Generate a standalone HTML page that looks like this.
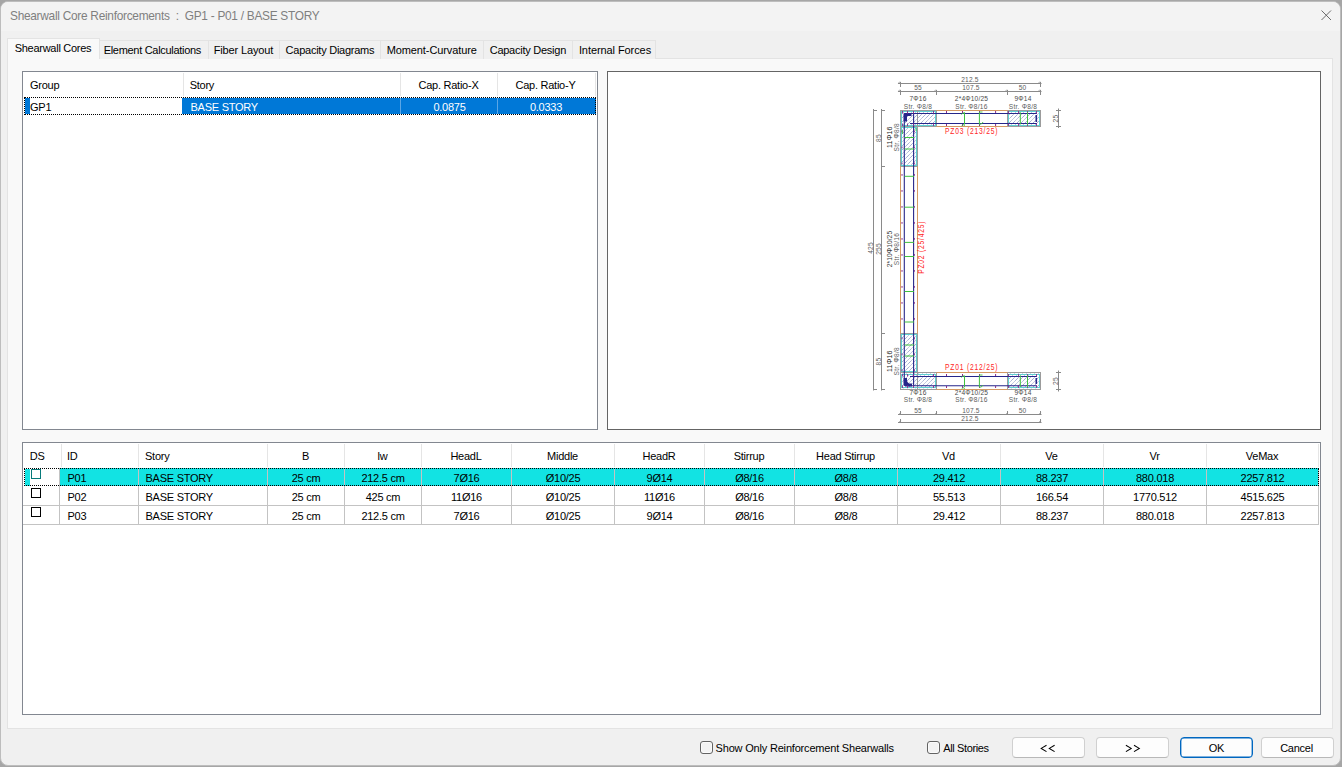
<!DOCTYPE html><html><head><meta charset="utf-8"><style>
html,body{margin:0;padding:0;}
body{width:1342px;height:767px;position:relative;overflow:hidden;background:#a6a6a6;font-family:"Liberation Sans", sans-serif;}
div{box-sizing:border-box;}
</style></head><body>
<div style="position:absolute;left:0px;top:1px;width:1341px;height:765px;background:#f0f0f0;border:1px solid #bdbdbd;border-radius:8px;overflow:hidden"></div>
<div style="position:absolute;left:1px;top:2px;width:1339px;height:29px;background:#f3f3f3;border-radius:7px 7px 0 0"></div>
<div style="position:absolute;left:10px;top:9.1px;line-height:13px;font-size:13px;letter-spacing:-0.3px;color:#7f7f7f;white-space:pre;transform:scaleX(0.913);transform-origin:0 0">Shearwall Core Reinforcements  :  GP1 - P01 / BASE STORY</div>
<svg style="position:absolute;left:1319px;top:8px" width="14" height="14" viewBox="0 0 14 14"><path d="M2.5 2.5L12 12M12 2.5L2.5 12" stroke="#5a5a5a" stroke-width="0.9" fill="none"/></svg>
<div style="position:absolute;left:7px;top:58px;width:1326px;height:671px;background:#f9f9f9;border:1px solid #e3e3e3"></div>
<div style="position:absolute;left:99px;top:40px;width:110px;height:19px;background:#f0f0f0;border:1px solid #e3e3e3;border-bottom:none"></div>
<div style="position:absolute;left:103.7px;top:44.69px;line-height:11px;font-size:11px;letter-spacing:-0.3px;color:#000;white-space:pre;">Element Calculations</div>
<div style="position:absolute;left:208px;top:40px;width:72px;height:19px;background:#f0f0f0;border:1px solid #e3e3e3;border-bottom:none"></div>
<div style="position:absolute;left:213.7px;top:44.69px;line-height:11px;font-size:11px;letter-spacing:-0.13px;color:#000;white-space:pre;">Fiber Layout</div>
<div style="position:absolute;left:279px;top:40px;width:102px;height:19px;background:#f0f0f0;border:1px solid #e3e3e3;border-bottom:none"></div>
<div style="position:absolute;left:285.6px;top:44.69px;line-height:11px;font-size:11px;letter-spacing:-0.25px;color:#000;white-space:pre;">Capacity Diagrams</div>
<div style="position:absolute;left:380px;top:40px;width:104px;height:19px;background:#f0f0f0;border:1px solid #e3e3e3;border-bottom:none"></div>
<div style="position:absolute;left:386.7px;top:44.69px;line-height:11px;font-size:11px;letter-spacing:-0.1px;color:#000;white-space:pre;">Moment-Curvature</div>
<div style="position:absolute;left:483px;top:40px;width:90px;height:19px;background:#f0f0f0;border:1px solid #e3e3e3;border-bottom:none"></div>
<div style="position:absolute;left:489.7px;top:44.69px;line-height:11px;font-size:11px;letter-spacing:-0.25px;color:#000;white-space:pre;">Capacity Design</div>
<div style="position:absolute;left:572px;top:40px;width:84px;height:19px;background:#f0f0f0;border:1px solid #e3e3e3;border-bottom:none"></div>
<div style="position:absolute;left:578.9px;top:44.69px;line-height:11px;font-size:11px;letter-spacing:-0.08px;color:#000;white-space:pre;">Internal Forces</div>
<div style="position:absolute;left:7px;top:38px;width:93px;height:21px;background:#f9f9f9;border:1px solid #e3e3e3;border-bottom:none"></div>
<div style="position:absolute;left:14.7px;top:42.69px;line-height:11px;font-size:11px;letter-spacing:-0.27px;color:#000;white-space:pre;">Shearwall Cores</div>
<div style="position:absolute;left:22px;top:71px;width:576px;height:359px;background:#fff;border:1px solid #828790"></div>
<div style="position:absolute;left:183px;top:73px;width:1px;height:23px;background:#e5e5e5"></div>
<div style="position:absolute;left:400px;top:73px;width:1px;height:23px;background:#e5e5e5"></div>
<div style="position:absolute;left:497px;top:73px;width:1px;height:23px;background:#e5e5e5"></div>
<div style="position:absolute;left:595px;top:73px;width:1px;height:23px;background:#e5e5e5"></div>
<div style="position:absolute;left:30px;top:79.69px;line-height:11px;font-size:11px;letter-spacing:-0.25px;color:#000;white-space:pre;">Group</div>
<div style="position:absolute;left:189.7px;top:79.69px;line-height:11px;font-size:11px;letter-spacing:-0.25px;color:#000;white-space:pre;">Story</div>
<div style="position:absolute;left:248.5px;top:79.69px;width:400px;text-align:center;line-height:11px;font-size:11px;letter-spacing:-0.25px;color:#000;white-space:pre;">Cap. Ratio-X</div>
<div style="position:absolute;left:345.5px;top:79.69px;width:400px;text-align:center;line-height:11px;font-size:11px;letter-spacing:-0.25px;color:#000;white-space:pre;">Cap. Ratio-Y</div>
<div style="position:absolute;left:25px;top:98px;width:5px;height:16px;background:#0078d7"></div>
<div style="position:absolute;left:182px;top:98px;width:414px;height:16px;background:#0078d7"></div>
<div style="position:absolute;left:400px;top:98px;width:1px;height:16px;background:#5aa6e6"></div>
<div style="position:absolute;left:497px;top:98px;width:1px;height:16px;background:#5aa6e6"></div>
<div style="position:absolute;left:30px;top:101.79px;line-height:11px;font-size:11px;letter-spacing:-0.25px;color:#000;white-space:pre;">GP1</div>
<div style="position:absolute;left:190.5px;top:101.79px;line-height:11px;font-size:11px;letter-spacing:-0.25px;color:#fff;white-space:pre;">BASE STORY</div>
<div style="position:absolute;left:249.5px;top:101.79px;width:400px;text-align:center;line-height:11px;font-size:11px;letter-spacing:-0.25px;color:#fff;white-space:pre;">0.0875</div>
<div style="position:absolute;left:346.0px;top:101.79px;width:400px;text-align:center;line-height:11px;font-size:11px;letter-spacing:-0.25px;color:#fff;white-space:pre;">0.0333</div>
<div style="position:absolute;left:24px;top:97px;width:572px;height:18px;border:1px dotted #000"></div>
<div style="position:absolute;left:607px;top:71px;width:714px;height:359px;background:#fff;border:1px solid #646464"></div>
<svg style="position:absolute;left:608px;top:72px" width="712" height="357" viewBox="608 72 712 357">
<defs><pattern id="ht" patternUnits="userSpaceOnUse" x="0.5" y="0.5" width="4" height="4"><path d="M0 4 L4 0 M-1 1 L1 -1 M3 5 L5 3" stroke="#5d71ad" stroke-width="0.85" stroke-dasharray="1 0.6"/></pattern></defs>
<clipPath id="c0"><rect x="901.5" y="111.5" width="34" height="14"/></clipPath>
<path clip-path="url(#c0)" d="M877.5 126.5L893.5 110.5M881.5 126.5L897.5 110.5M885.5 126.5L901.5 110.5M889.5 126.5L905.5 110.5M893.5 126.5L909.5 110.5M897.5 126.5L913.5 110.5M901.5 126.5L917.5 110.5M905.5 126.5L921.5 110.5M909.5 126.5L925.5 110.5M913.5 126.5L929.5 110.5M917.5 126.5L933.5 110.5M921.5 126.5L937.5 110.5M925.5 126.5L941.5 110.5M929.5 126.5L945.5 110.5M933.5 126.5L949.5 110.5M937.5 126.5L953.5 110.5" stroke="#5d71ad" stroke-width="0.8" stroke-dasharray="1 0.7" fill="none"/>
<rect x="901.5" y="111.5" width="34" height="14" fill="none" stroke="#5fd2d2" stroke-width="1" />
<clipPath id="c1"><rect x="1008.5" y="111.5" width="31" height="14"/></clipPath>
<path clip-path="url(#c1)" d="M985.5 126.5L1001.5 110.5M989.5 126.5L1005.5 110.5M993.5 126.5L1009.5 110.5M997.5 126.5L1013.5 110.5M1001.5 126.5L1017.5 110.5M1005.5 126.5L1021.5 110.5M1009.5 126.5L1025.5 110.5M1013.5 126.5L1029.5 110.5M1017.5 126.5L1033.5 110.5M1021.5 126.5L1037.5 110.5M1025.5 126.5L1041.5 110.5M1029.5 126.5L1045.5 110.5M1033.5 126.5L1049.5 110.5M1037.5 126.5L1053.5 110.5M1041.5 126.5L1057.5 110.5" stroke="#5d71ad" stroke-width="0.8" stroke-dasharray="1 0.7" fill="none"/>
<rect x="1008.5" y="111.5" width="31" height="14" fill="none" stroke="#5fd2d2" stroke-width="1" />
<clipPath id="c2"><rect x="901.5" y="127.5" width="15" height="38"/></clipPath>
<path clip-path="url(#c2)" d="M853.5 166.5L893.5 126.5M857.5 166.5L897.5 126.5M861.5 166.5L901.5 126.5M865.5 166.5L905.5 126.5M869.5 166.5L909.5 126.5M873.5 166.5L913.5 126.5M877.5 166.5L917.5 126.5M881.5 166.5L921.5 126.5M885.5 166.5L925.5 126.5M889.5 166.5L929.5 126.5M893.5 166.5L933.5 126.5M897.5 166.5L937.5 126.5M901.5 166.5L941.5 126.5M905.5 166.5L945.5 126.5M909.5 166.5L949.5 126.5M913.5 166.5L953.5 126.5M917.5 166.5L957.5 126.5" stroke="#5d71ad" stroke-width="0.8" stroke-dasharray="1 0.7" fill="none"/>
<rect x="901.5" y="127.5" width="15" height="38" fill="none" stroke="#5fd2d2" stroke-width="1" />
<clipPath id="c3"><rect x="901.5" y="334.5" width="15" height="37"/></clipPath>
<path clip-path="url(#c3)" d="M855.5 372.5L894.5 333.5M859.5 372.5L898.5 333.5M863.5 372.5L902.5 333.5M867.5 372.5L906.5 333.5M871.5 372.5L910.5 333.5M875.5 372.5L914.5 333.5M879.5 372.5L918.5 333.5M883.5 372.5L922.5 333.5M887.5 372.5L926.5 333.5M891.5 372.5L930.5 333.5M895.5 372.5L934.5 333.5M899.5 372.5L938.5 333.5M903.5 372.5L942.5 333.5M907.5 372.5L946.5 333.5M911.5 372.5L950.5 333.5M915.5 372.5L954.5 333.5M919.5 372.5L958.5 333.5" stroke="#5d71ad" stroke-width="0.8" stroke-dasharray="1 0.7" fill="none"/>
<rect x="901.5" y="334.5" width="15" height="37" fill="none" stroke="#5fd2d2" stroke-width="1" />
<clipPath id="c4"><rect x="901.5" y="373.5" width="34" height="15"/></clipPath>
<path clip-path="url(#c4)" d="M878.5 389.5L895.5 372.5M882.5 389.5L899.5 372.5M886.5 389.5L903.5 372.5M890.5 389.5L907.5 372.5M894.5 389.5L911.5 372.5M898.5 389.5L915.5 372.5M902.5 389.5L919.5 372.5M906.5 389.5L923.5 372.5M910.5 389.5L927.5 372.5M914.5 389.5L931.5 372.5M918.5 389.5L935.5 372.5M922.5 389.5L939.5 372.5M926.5 389.5L943.5 372.5M930.5 389.5L947.5 372.5M934.5 389.5L951.5 372.5M938.5 389.5L955.5 372.5" stroke="#5d71ad" stroke-width="0.8" stroke-dasharray="1 0.7" fill="none"/>
<rect x="901.5" y="374.5" width="34" height="13" fill="none" stroke="#5fd2d2" stroke-width="1" />
<clipPath id="c5"><rect x="1008.5" y="373.5" width="31" height="15"/></clipPath>
<path clip-path="url(#c5)" d="M986.5 389.5L1003.5 372.5M990.5 389.5L1007.5 372.5M994.5 389.5L1011.5 372.5M998.5 389.5L1015.5 372.5M1002.5 389.5L1019.5 372.5M1006.5 389.5L1023.5 372.5M1010.5 389.5L1027.5 372.5M1014.5 389.5L1031.5 372.5M1018.5 389.5L1035.5 372.5M1022.5 389.5L1039.5 372.5M1026.5 389.5L1043.5 372.5M1030.5 389.5L1047.5 372.5M1034.5 389.5L1051.5 372.5M1038.5 389.5L1055.5 372.5M1042.5 389.5L1059.5 372.5" stroke="#5d71ad" stroke-width="0.8" stroke-dasharray="1 0.7" fill="none"/>
<rect x="1008.5" y="374.5" width="31" height="13" fill="none" stroke="#5fd2d2" stroke-width="1" />
<rect x="900.5" y="110.5" width="36" height="16" fill="none" stroke="#9c9c9c" stroke-width="1" />
<rect x="1007.5" y="110.5" width="33" height="16" fill="none" stroke="#9c9c9c" stroke-width="1" />
<rect x="900.5" y="126.5" width="17" height="40" fill="none" stroke="#9c9c9c" stroke-width="1" />
<rect x="900.5" y="333.5" width="17" height="39" fill="none" stroke="#9c9c9c" stroke-width="1" />
<rect x="900.5" y="372.5" width="36" height="17" fill="none" stroke="#9c9c9c" stroke-width="1" />
<rect x="1007.5" y="372.5" width="33" height="17" fill="none" stroke="#9c9c9c" stroke-width="1" />
<line x1="917.5" y1="110.5" x2="917.5" y2="126.5" stroke="#9c9c9c" stroke-width="1" />
<line x1="917.5" y1="372.5" x2="917.5" y2="389.5" stroke="#9c9c9c" stroke-width="1" />
<line x1="936.5" y1="110.5" x2="1007.5" y2="110.5" stroke="#d59a62" stroke-width="1" />
<line x1="936.5" y1="126.5" x2="1007.5" y2="126.5" stroke="#d59a62" stroke-width="1" />
<line x1="936.5" y1="372.5" x2="1007.5" y2="372.5" stroke="#d59a62" stroke-width="1" />
<line x1="936.5" y1="389.5" x2="1007.5" y2="389.5" stroke="#d59a62" stroke-width="1" />
<line x1="900.5" y1="166.5" x2="900.5" y2="333.5" stroke="#d59a62" stroke-width="1" />
<line x1="917.5" y1="166.5" x2="917.5" y2="333.5" stroke="#d59a62" stroke-width="1" />
<line x1="905" y1="113.5" x2="1037" y2="113.5" stroke="#26268a" stroke-width="1.1" />
<line x1="910" y1="123.5" x2="1037" y2="123.5" stroke="#26268a" stroke-width="1.1" />
<line x1="910" y1="376.5" x2="1037" y2="376.5" stroke="#26268a" stroke-width="1.1" />
<line x1="905" y1="385.7" x2="1037" y2="385.7" stroke="#26268a" stroke-width="1.1" />
<line x1="904.3" y1="113" x2="904.3" y2="386" stroke="#26268a" stroke-width="1.1" />
<line x1="913.6" y1="114" x2="913.6" y2="386" stroke="#26268a" stroke-width="1.1" />
<line x1="1036.3" y1="115" x2="1036.3" y2="122" stroke="#26268a" stroke-width="1.6" />
<line x1="1036.3" y1="378" x2="1036.3" y2="384" stroke="#26268a" stroke-width="1.6" />
<path d="M903.6 121.5 L903.6 114.5 Q903.6 113 905.5 113 L911.5 113 L911.5 116 L907 116 L907 121.5 Z" fill="#26268a"/>
<path d="M903.6 378 L903.6 383 Q904 386.5 908 386.5 L912 386.5 L912 383.5 L909 383.5 Q907 383 907 380 L907 378 Z" fill="#26268a"/>
<line x1="946.5" y1="111" x2="946.5" y2="113" stroke="#8c2a8c" stroke-width="1" />
<line x1="946.5" y1="124" x2="946.5" y2="126" stroke="#8c2a8c" stroke-width="1" />
<line x1="946.5" y1="374" x2="946.5" y2="376" stroke="#8c2a8c" stroke-width="1" />
<line x1="946.5" y1="386" x2="946.5" y2="388" stroke="#8c2a8c" stroke-width="1" />
<line x1="962.5" y1="111" x2="962.5" y2="113" stroke="#8c2a8c" stroke-width="1" />
<line x1="962.5" y1="124" x2="962.5" y2="126" stroke="#8c2a8c" stroke-width="1" />
<line x1="962.5" y1="374" x2="962.5" y2="376" stroke="#8c2a8c" stroke-width="1" />
<line x1="962.5" y1="386" x2="962.5" y2="388" stroke="#8c2a8c" stroke-width="1" />
<line x1="979.5" y1="111" x2="979.5" y2="113" stroke="#8c2a8c" stroke-width="1" />
<line x1="979.5" y1="124" x2="979.5" y2="126" stroke="#8c2a8c" stroke-width="1" />
<line x1="979.5" y1="374" x2="979.5" y2="376" stroke="#8c2a8c" stroke-width="1" />
<line x1="979.5" y1="386" x2="979.5" y2="388" stroke="#8c2a8c" stroke-width="1" />
<line x1="995.6" y1="111" x2="995.6" y2="113" stroke="#8c2a8c" stroke-width="1" />
<line x1="995.6" y1="124" x2="995.6" y2="126" stroke="#8c2a8c" stroke-width="1" />
<line x1="995.6" y1="374" x2="995.6" y2="376" stroke="#8c2a8c" stroke-width="1" />
<line x1="995.6" y1="386" x2="995.6" y2="388" stroke="#8c2a8c" stroke-width="1" />
<line x1="902.5" y1="111" x2="902.5" y2="113.5" stroke="#8c2a8c" stroke-width="0.9" />
<line x1="902.5" y1="123.5" x2="902.5" y2="126" stroke="#8c2a8c" stroke-width="0.9" />
<line x1="902.5" y1="374" x2="902.5" y2="376.5" stroke="#8c2a8c" stroke-width="0.9" />
<line x1="902.5" y1="385.5" x2="902.5" y2="388" stroke="#8c2a8c" stroke-width="0.9" />
<line x1="907.5" y1="111" x2="907.5" y2="113.5" stroke="#8c2a8c" stroke-width="0.9" />
<line x1="907.5" y1="123.5" x2="907.5" y2="126" stroke="#8c2a8c" stroke-width="0.9" />
<line x1="907.5" y1="374" x2="907.5" y2="376.5" stroke="#8c2a8c" stroke-width="0.9" />
<line x1="907.5" y1="385.5" x2="907.5" y2="388" stroke="#8c2a8c" stroke-width="0.9" />
<line x1="913.5" y1="111" x2="913.5" y2="113.5" stroke="#8c2a8c" stroke-width="0.9" />
<line x1="913.5" y1="123.5" x2="913.5" y2="126" stroke="#8c2a8c" stroke-width="0.9" />
<line x1="913.5" y1="374" x2="913.5" y2="376.5" stroke="#8c2a8c" stroke-width="0.9" />
<line x1="913.5" y1="385.5" x2="913.5" y2="388" stroke="#8c2a8c" stroke-width="0.9" />
<line x1="933.5" y1="111" x2="933.5" y2="113.5" stroke="#8c2a8c" stroke-width="0.9" />
<line x1="933.5" y1="123.5" x2="933.5" y2="126" stroke="#8c2a8c" stroke-width="0.9" />
<line x1="933.5" y1="374" x2="933.5" y2="376.5" stroke="#8c2a8c" stroke-width="0.9" />
<line x1="933.5" y1="385.5" x2="933.5" y2="388" stroke="#8c2a8c" stroke-width="0.9" />
<line x1="1008.5" y1="111" x2="1008.5" y2="113.5" stroke="#8c2a8c" stroke-width="0.9" />
<line x1="1008.5" y1="123.5" x2="1008.5" y2="126" stroke="#8c2a8c" stroke-width="0.9" />
<line x1="1008.5" y1="374" x2="1008.5" y2="376.5" stroke="#8c2a8c" stroke-width="0.9" />
<line x1="1008.5" y1="385.5" x2="1008.5" y2="388" stroke="#8c2a8c" stroke-width="0.9" />
<line x1="1018.5" y1="111" x2="1018.5" y2="113.5" stroke="#8c2a8c" stroke-width="0.9" />
<line x1="1018.5" y1="123.5" x2="1018.5" y2="126" stroke="#8c2a8c" stroke-width="0.9" />
<line x1="1018.5" y1="374" x2="1018.5" y2="376.5" stroke="#8c2a8c" stroke-width="0.9" />
<line x1="1018.5" y1="385.5" x2="1018.5" y2="388" stroke="#8c2a8c" stroke-width="0.9" />
<line x1="1027.5" y1="111" x2="1027.5" y2="113.5" stroke="#8c2a8c" stroke-width="0.9" />
<line x1="1027.5" y1="123.5" x2="1027.5" y2="126" stroke="#8c2a8c" stroke-width="0.9" />
<line x1="1027.5" y1="374" x2="1027.5" y2="376.5" stroke="#8c2a8c" stroke-width="0.9" />
<line x1="1027.5" y1="385.5" x2="1027.5" y2="388" stroke="#8c2a8c" stroke-width="0.9" />
<line x1="1036.5" y1="111" x2="1036.5" y2="113.5" stroke="#8c2a8c" stroke-width="0.9" />
<line x1="1036.5" y1="123.5" x2="1036.5" y2="126" stroke="#8c2a8c" stroke-width="0.9" />
<line x1="1036.5" y1="374" x2="1036.5" y2="376.5" stroke="#8c2a8c" stroke-width="0.9" />
<line x1="1036.5" y1="385.5" x2="1036.5" y2="388" stroke="#8c2a8c" stroke-width="0.9" />
<line x1="902" y1="174" x2="902" y2="175.8" stroke="#8c2a8c" stroke-width="1" />
<line x1="914.5" y1="174" x2="914.5" y2="175.8" stroke="#8c2a8c" stroke-width="0.8" />
<line x1="902" y1="190" x2="902" y2="191.8" stroke="#8c2a8c" stroke-width="1" />
<line x1="914.5" y1="190" x2="914.5" y2="191.8" stroke="#8c2a8c" stroke-width="0.8" />
<line x1="902" y1="206" x2="902" y2="207.8" stroke="#8c2a8c" stroke-width="1" />
<line x1="914.5" y1="206" x2="914.5" y2="207.8" stroke="#8c2a8c" stroke-width="0.8" />
<line x1="902" y1="222" x2="902" y2="223.8" stroke="#8c2a8c" stroke-width="1" />
<line x1="914.5" y1="222" x2="914.5" y2="223.8" stroke="#8c2a8c" stroke-width="0.8" />
<line x1="902" y1="238" x2="902" y2="239.8" stroke="#8c2a8c" stroke-width="1" />
<line x1="914.5" y1="238" x2="914.5" y2="239.8" stroke="#8c2a8c" stroke-width="0.8" />
<line x1="902" y1="254" x2="902" y2="255.8" stroke="#8c2a8c" stroke-width="1" />
<line x1="914.5" y1="254" x2="914.5" y2="255.8" stroke="#8c2a8c" stroke-width="0.8" />
<line x1="902" y1="270" x2="902" y2="271.8" stroke="#8c2a8c" stroke-width="1" />
<line x1="914.5" y1="270" x2="914.5" y2="271.8" stroke="#8c2a8c" stroke-width="0.8" />
<line x1="902" y1="286" x2="902" y2="287.8" stroke="#8c2a8c" stroke-width="1" />
<line x1="914.5" y1="286" x2="914.5" y2="287.8" stroke="#8c2a8c" stroke-width="0.8" />
<line x1="902" y1="302" x2="902" y2="303.8" stroke="#8c2a8c" stroke-width="1" />
<line x1="914.5" y1="302" x2="914.5" y2="303.8" stroke="#8c2a8c" stroke-width="0.8" />
<line x1="902" y1="318" x2="902" y2="319.8" stroke="#8c2a8c" stroke-width="1" />
<line x1="914.5" y1="318" x2="914.5" y2="319.8" stroke="#8c2a8c" stroke-width="0.8" />
<line x1="902" y1="130.5" x2="902" y2="132.3" stroke="#8c2a8c" stroke-width="1" />
<line x1="914.5" y1="130.5" x2="914.5" y2="132.3" stroke="#8c2a8c" stroke-width="0.8" />
<line x1="902" y1="146.5" x2="902" y2="148.3" stroke="#8c2a8c" stroke-width="1" />
<line x1="914.5" y1="146.5" x2="914.5" y2="148.3" stroke="#8c2a8c" stroke-width="0.8" />
<line x1="902" y1="162.5" x2="902" y2="164.3" stroke="#8c2a8c" stroke-width="1" />
<line x1="914.5" y1="162.5" x2="914.5" y2="164.3" stroke="#8c2a8c" stroke-width="0.8" />
<line x1="902" y1="337.5" x2="902" y2="339.3" stroke="#8c2a8c" stroke-width="1" />
<line x1="914.5" y1="337.5" x2="914.5" y2="339.3" stroke="#8c2a8c" stroke-width="0.8" />
<line x1="902" y1="353.5" x2="902" y2="355.3" stroke="#8c2a8c" stroke-width="1" />
<line x1="914.5" y1="353.5" x2="914.5" y2="355.3" stroke="#8c2a8c" stroke-width="0.8" />
<line x1="902" y1="369.5" x2="902" y2="371.3" stroke="#8c2a8c" stroke-width="1" />
<line x1="914.5" y1="369.5" x2="914.5" y2="371.3" stroke="#8c2a8c" stroke-width="0.8" />
<line x1="964.5" y1="112.3" x2="964.5" y2="124.5" stroke="#3fc23f" stroke-width="1" />
<line x1="964.5" y1="375.5" x2="964.5" y2="387" stroke="#3fc23f" stroke-width="1" />
<line x1="979.4" y1="112.3" x2="979.4" y2="124.5" stroke="#3fc23f" stroke-width="1" />
<line x1="979.4" y1="375.5" x2="979.4" y2="387" stroke="#3fc23f" stroke-width="1" />
<line x1="1020.3" y1="112.3" x2="1020.3" y2="124.5" stroke="#3fc23f" stroke-width="1" />
<line x1="1020.3" y1="375.5" x2="1020.3" y2="387" stroke="#3fc23f" stroke-width="1" />
<line x1="1027.5" y1="112.3" x2="1027.5" y2="124.5" stroke="#3fc23f" stroke-width="1" />
<line x1="1027.5" y1="375.5" x2="1027.5" y2="387" stroke="#3fc23f" stroke-width="1" />
<line x1="904.5" y1="137.5" x2="914" y2="137.5" stroke="#3fc23f" stroke-width="1" />
<line x1="904.5" y1="149" x2="914" y2="149" stroke="#3fc23f" stroke-width="1" />
<line x1="904.5" y1="176.3" x2="914" y2="176.3" stroke="#3fc23f" stroke-width="1" />
<line x1="904.5" y1="207.2" x2="914" y2="207.2" stroke="#3fc23f" stroke-width="1" />
<line x1="904.5" y1="242.4" x2="914" y2="242.4" stroke="#3fc23f" stroke-width="1" />
<line x1="904.5" y1="256.5" x2="914" y2="256.5" stroke="#3fc23f" stroke-width="1" />
<line x1="904.5" y1="291.5" x2="914" y2="291.5" stroke="#3fc23f" stroke-width="1" />
<line x1="904.5" y1="322" x2="914" y2="322" stroke="#3fc23f" stroke-width="1" />
<line x1="904.5" y1="345" x2="914" y2="345" stroke="#3fc23f" stroke-width="1" />
<line x1="904.5" y1="356" x2="914" y2="356" stroke="#3fc23f" stroke-width="1" />
<line x1="902.5" y1="130" x2="902.5" y2="134" stroke="#3fc23f" stroke-width="0.8" />
<line x1="916" y1="128" x2="916" y2="131" stroke="#3fc23f" stroke-width="0.8" />
<path d="M961.5 114.5 L963 112.8 L964.5 113.5 M961.5 126 L963 124.6 L965 125.5 M979.4 112 L982.5 112 M979.4 124.5 L982 123.5 L983 122 M961.5 377.5 L963 375.8 L964.5 376.5 M961.5 389 L963 387.6 L965 388.5 M979.4 375 L982.5 375 M979.4 387.5 L982 386.5 L983 385" stroke="#3fc23f" stroke-width="0.9" fill="none"/>
<line x1="898.0" y1="83.5" x2="1041.5" y2="83.5" stroke="#8a8a8a" stroke-width="1" />
<line x1="900.5" y1="82.0" x2="900.5" y2="87.0" stroke="#8a8a8a" stroke-width="1" />
<line x1="898.5" y1="83.2" x2="899.9" y2="81.6" stroke="#8a8a8a" stroke-width="0.8" />
<line x1="1040.5" y1="82.0" x2="1040.5" y2="87.0" stroke="#8a8a8a" stroke-width="1" />
<line x1="1038.5" y1="83.2" x2="1039.9" y2="81.6" stroke="#8a8a8a" stroke-width="0.8" />
<line x1="898.0" y1="91.5" x2="1041.5" y2="91.5" stroke="#8a8a8a" stroke-width="1" />
<line x1="900.5" y1="90.0" x2="900.5" y2="95.0" stroke="#8a8a8a" stroke-width="1" />
<line x1="898.5" y1="91.2" x2="899.9" y2="89.6" stroke="#8a8a8a" stroke-width="0.8" />
<line x1="936.5" y1="90.0" x2="936.5" y2="95.0" stroke="#8a8a8a" stroke-width="1" />
<line x1="934.5" y1="91.2" x2="935.9" y2="89.6" stroke="#8a8a8a" stroke-width="0.8" />
<line x1="1007.5" y1="90.0" x2="1007.5" y2="95.0" stroke="#8a8a8a" stroke-width="1" />
<line x1="1005.5" y1="91.2" x2="1006.9" y2="89.6" stroke="#8a8a8a" stroke-width="0.8" />
<line x1="1040.5" y1="90.0" x2="1040.5" y2="95.0" stroke="#8a8a8a" stroke-width="1" />
<line x1="1038.5" y1="91.2" x2="1039.9" y2="89.6" stroke="#8a8a8a" stroke-width="0.8" />
<line x1="898.0" y1="414.5" x2="1041.5" y2="414.5" stroke="#8a8a8a" stroke-width="1" />
<line x1="900.5" y1="411.0" x2="900.5" y2="415.0" stroke="#8a8a8a" stroke-width="1" />
<line x1="898.5" y1="414.8" x2="900.5" y2="412.8" stroke="#8a8a8a" stroke-width="0.8" />
<line x1="936.5" y1="411.0" x2="936.5" y2="415.0" stroke="#8a8a8a" stroke-width="1" />
<line x1="934.5" y1="414.8" x2="936.5" y2="412.8" stroke="#8a8a8a" stroke-width="0.8" />
<line x1="1007.5" y1="411.0" x2="1007.5" y2="415.0" stroke="#8a8a8a" stroke-width="1" />
<line x1="1005.5" y1="414.8" x2="1007.5" y2="412.8" stroke="#8a8a8a" stroke-width="0.8" />
<line x1="1040.5" y1="411.0" x2="1040.5" y2="415.0" stroke="#8a8a8a" stroke-width="1" />
<line x1="1038.5" y1="414.8" x2="1040.5" y2="412.8" stroke="#8a8a8a" stroke-width="0.8" />
<line x1="898.0" y1="422.5" x2="1041.5" y2="422.5" stroke="#8a8a8a" stroke-width="1" />
<line x1="900.5" y1="419.0" x2="900.5" y2="423.0" stroke="#8a8a8a" stroke-width="1" />
<line x1="898.5" y1="422.8" x2="900.5" y2="420.8" stroke="#8a8a8a" stroke-width="0.8" />
<line x1="1040.5" y1="419.0" x2="1040.5" y2="423.0" stroke="#8a8a8a" stroke-width="1" />
<line x1="1038.5" y1="422.8" x2="1040.5" y2="420.8" stroke="#8a8a8a" stroke-width="0.8" />
<line x1="873.5" y1="109" x2="873.5" y2="390.5" stroke="#8a8a8a" stroke-width="1" />
<line x1="881.5" y1="109" x2="881.5" y2="390.5" stroke="#8a8a8a" stroke-width="1" />
<line x1="873.5" y1="110.5" x2="877" y2="110.5" stroke="#8a8a8a" stroke-width="1" />
<line x1="873.5" y1="389.5" x2="877" y2="389.5" stroke="#8a8a8a" stroke-width="1" />
<line x1="881.5" y1="110.5" x2="885" y2="110.5" stroke="#8a8a8a" stroke-width="1" />
<line x1="881.5" y1="166.5" x2="885" y2="166.5" stroke="#8a8a8a" stroke-width="1" />
<line x1="881.5" y1="333.5" x2="885" y2="333.5" stroke="#8a8a8a" stroke-width="1" />
<line x1="881.5" y1="389.5" x2="885" y2="389.5" stroke="#8a8a8a" stroke-width="1" />
<line x1="1058.5" y1="108.5" x2="1058.5" y2="128" stroke="#8a8a8a" stroke-width="1" />
<line x1="1056" y1="110.5" x2="1061" y2="110.5" stroke="#8a8a8a" stroke-width="1" />
<line x1="1056" y1="126.5" x2="1061" y2="126.5" stroke="#8a8a8a" stroke-width="1" />
<line x1="1058.5" y1="370.5" x2="1058.5" y2="391.5" stroke="#8a8a8a" stroke-width="1" />
<line x1="1056" y1="372.5" x2="1061" y2="372.5" stroke="#8a8a8a" stroke-width="1" />
<line x1="1056" y1="389.5" x2="1061" y2="389.5" stroke="#8a8a8a" stroke-width="1" />
<text x="970" y="81.8" font-family="Liberation Sans, sans-serif" font-size="6.6" fill="#5c5c5c" text-anchor="middle" letter-spacing="0.2" font-weight="normal">212.5</text>
<text x="918" y="89.9" font-family="Liberation Sans, sans-serif" font-size="6.6" fill="#5c5c5c" text-anchor="middle" letter-spacing="0.2" font-weight="normal">55</text>
<text x="971" y="89.9" font-family="Liberation Sans, sans-serif" font-size="6.6" fill="#5c5c5c" text-anchor="middle" letter-spacing="0.2" font-weight="normal">107.5</text>
<text x="1022.5" y="89.9" font-family="Liberation Sans, sans-serif" font-size="6.6" fill="#5c5c5c" text-anchor="middle" letter-spacing="0.2" font-weight="normal">50</text>
<text x="918" y="101" font-family="Liberation Sans, sans-serif" font-size="6.6" fill="#4a4a4a" text-anchor="middle" letter-spacing="0.2" font-weight="normal">7Φ16</text>
<text x="918" y="108.9" font-family="Liberation Sans, sans-serif" font-size="6.6" fill="#5c5c5c" text-anchor="middle" letter-spacing="0.25" font-weight="normal">Str. Φ8/8</text>
<text x="971.5" y="101" font-family="Liberation Sans, sans-serif" font-size="6.6" fill="#4a4a4a" text-anchor="middle" letter-spacing="0.2" font-weight="normal">2*4Φ10/25</text>
<text x="971.5" y="108.9" font-family="Liberation Sans, sans-serif" font-size="6.6" fill="#5c5c5c" text-anchor="middle" letter-spacing="0.25" font-weight="normal">Str. Φ8/16</text>
<text x="1023" y="101" font-family="Liberation Sans, sans-serif" font-size="6.6" fill="#4a4a4a" text-anchor="middle" letter-spacing="0.2" font-weight="normal">9Φ14</text>
<text x="1023" y="108.9" font-family="Liberation Sans, sans-serif" font-size="6.6" fill="#5c5c5c" text-anchor="middle" letter-spacing="0.25" font-weight="normal">Str. Φ8/8</text>
<text x="918" y="394.6" font-family="Liberation Sans, sans-serif" font-size="6.6" fill="#4a4a4a" text-anchor="middle" letter-spacing="0.2" font-weight="normal">7Φ16</text>
<text x="918" y="402.3" font-family="Liberation Sans, sans-serif" font-size="6.6" fill="#5c5c5c" text-anchor="middle" letter-spacing="0.25" font-weight="normal">Str. Φ8/8</text>
<text x="971.5" y="394.6" font-family="Liberation Sans, sans-serif" font-size="6.6" fill="#4a4a4a" text-anchor="middle" letter-spacing="0.2" font-weight="normal">2*4Φ10/25</text>
<text x="971.5" y="402.3" font-family="Liberation Sans, sans-serif" font-size="6.6" fill="#5c5c5c" text-anchor="middle" letter-spacing="0.25" font-weight="normal">Str. Φ8/16</text>
<text x="1023" y="394.6" font-family="Liberation Sans, sans-serif" font-size="6.6" fill="#4a4a4a" text-anchor="middle" letter-spacing="0.2" font-weight="normal">9Φ14</text>
<text x="1023" y="402.3" font-family="Liberation Sans, sans-serif" font-size="6.6" fill="#5c5c5c" text-anchor="middle" letter-spacing="0.25" font-weight="normal">Str. Φ8/8</text>
<text x="918" y="412.7" font-family="Liberation Sans, sans-serif" font-size="6.6" fill="#5c5c5c" text-anchor="middle" letter-spacing="0.2" font-weight="normal">55</text>
<text x="971" y="412.7" font-family="Liberation Sans, sans-serif" font-size="6.6" fill="#5c5c5c" text-anchor="middle" letter-spacing="0.2" font-weight="normal">107.5</text>
<text x="1022.5" y="412.7" font-family="Liberation Sans, sans-serif" font-size="6.6" fill="#5c5c5c" text-anchor="middle" letter-spacing="0.2" font-weight="normal">50</text>
<text x="970" y="420.8" font-family="Liberation Sans, sans-serif" font-size="6.6" fill="#5c5c5c" text-anchor="middle" letter-spacing="0.2" font-weight="normal">212.5</text>
<text transform="translate(945 134) scale(0.78 1)" x="0" y="0" font-family="Liberation Sans, sans-serif" font-size="8.6" fill="#ff2424" textLength="67.44" lengthAdjust="spacing">PZ03 (213/25)</text>
<text transform="translate(945 369.7) scale(0.78 1)" x="0" y="0" font-family="Liberation Sans, sans-serif" font-size="8.6" fill="#ff2424" textLength="67.44" lengthAdjust="spacing">PZ01 (212/25)</text>
<text x="880.8" y="138" font-family="Liberation Sans, sans-serif" font-size="6.6" fill="#5c5c5c" text-anchor="middle" letter-spacing="0.2" font-weight="normal" transform="rotate(-90 880.8 138)">85</text>
<text x="880.8" y="361.5" font-family="Liberation Sans, sans-serif" font-size="6.6" fill="#5c5c5c" text-anchor="middle" letter-spacing="0.2" font-weight="normal" transform="rotate(-90 880.8 361.5)">85</text>
<text x="873" y="248" font-family="Liberation Sans, sans-serif" font-size="6.6" fill="#5c5c5c" text-anchor="middle" letter-spacing="0.2" font-weight="normal" transform="rotate(-90 873 248)">425</text>
<text x="880.8" y="249" font-family="Liberation Sans, sans-serif" font-size="6.6" fill="#5c5c5c" text-anchor="middle" letter-spacing="0.2" font-weight="normal" transform="rotate(-90 880.8 249)">255</text>
<text x="891.8" y="137.2" font-family="Liberation Sans, sans-serif" font-size="7.0" fill="#202020" text-anchor="middle" letter-spacing="0.2" font-weight="normal" transform="rotate(-90 891.8 137.2)">11Φ16</text>
<text x="898.8" y="137.2" font-family="Liberation Sans, sans-serif" font-size="6.6" fill="#5c5c5c" text-anchor="middle" letter-spacing="0.25" font-weight="normal" transform="rotate(-90 898.8 137.2)">Str. Φ8/8</text>
<text x="891.8" y="361.2" font-family="Liberation Sans, sans-serif" font-size="7.0" fill="#202020" text-anchor="middle" letter-spacing="0.2" font-weight="normal" transform="rotate(-90 891.8 361.2)">11Φ16</text>
<text x="898.8" y="361.2" font-family="Liberation Sans, sans-serif" font-size="6.6" fill="#5c5c5c" text-anchor="middle" letter-spacing="0.25" font-weight="normal" transform="rotate(-90 898.8 361.2)">Str. Φ8/8</text>
<text x="891.8" y="249" font-family="Liberation Sans, sans-serif" font-size="6.6" fill="#3a3a3a" text-anchor="middle" letter-spacing="0.1" font-weight="normal" transform="rotate(-90 891.8 249)">2*10Φ10/25</text>
<text x="898.8" y="249" font-family="Liberation Sans, sans-serif" font-size="6.6" fill="#5c5c5c" text-anchor="middle" letter-spacing="0.25" font-weight="normal" transform="rotate(-90 898.8 249)">Str. Φ8/16</text>
<text transform="translate(923.6 273.8) rotate(-90) scale(0.78 1)" x="0" y="0" font-family="Liberation Sans, sans-serif" font-size="8.6" fill="#ff2424" textLength="67.05" lengthAdjust="spacing">PZ02 (25/425)</text>
<text x="1057.6" y="118.5" font-family="Liberation Sans, sans-serif" font-size="6.6" fill="#5c5c5c" text-anchor="middle" letter-spacing="0.2" font-weight="normal" transform="rotate(-90 1057.6 118.5)">25</text>
<text x="1057.6" y="381" font-family="Liberation Sans, sans-serif" font-size="6.6" fill="#5c5c5c" text-anchor="middle" letter-spacing="0.2" font-weight="normal" transform="rotate(-90 1057.6 381)">25</text>
</svg>
<div style="position:absolute;left:22px;top:442px;width:1299px;height:273px;background:#fff;border:1px solid #828790"></div>
<div style="position:absolute;left:61px;top:444px;width:1px;height:23px;background:#e5e5e5"></div>
<div style="position:absolute;left:138px;top:444px;width:1px;height:23px;background:#e5e5e5"></div>
<div style="position:absolute;left:267px;top:444px;width:1px;height:23px;background:#e5e5e5"></div>
<div style="position:absolute;left:344px;top:444px;width:1px;height:23px;background:#e5e5e5"></div>
<div style="position:absolute;left:421px;top:444px;width:1px;height:23px;background:#e5e5e5"></div>
<div style="position:absolute;left:511px;top:444px;width:1px;height:23px;background:#e5e5e5"></div>
<div style="position:absolute;left:614px;top:444px;width:1px;height:23px;background:#e5e5e5"></div>
<div style="position:absolute;left:704px;top:444px;width:1px;height:23px;background:#e5e5e5"></div>
<div style="position:absolute;left:794px;top:444px;width:1px;height:23px;background:#e5e5e5"></div>
<div style="position:absolute;left:897px;top:444px;width:1px;height:23px;background:#e5e5e5"></div>
<div style="position:absolute;left:1000px;top:444px;width:1px;height:23px;background:#e5e5e5"></div>
<div style="position:absolute;left:1103px;top:444px;width:1px;height:23px;background:#e5e5e5"></div>
<div style="position:absolute;left:1206px;top:444px;width:1px;height:23px;background:#e5e5e5"></div>
<div style="position:absolute;left:1318px;top:444px;width:1px;height:23px;background:#e5e5e5"></div>
<div style="position:absolute;left:29.7px;top:450.69px;line-height:11px;font-size:11px;letter-spacing:-0.25px;color:#000;white-space:pre;">DS</div>
<div style="position:absolute;left:67px;top:450.69px;line-height:11px;font-size:11px;letter-spacing:-0.25px;color:#000;white-space:pre;">ID</div>
<div style="position:absolute;left:145px;top:450.69px;line-height:11px;font-size:11px;letter-spacing:-0.25px;color:#000;white-space:pre;">Story</div>
<div style="position:absolute;left:105.5px;top:450.69px;width:400px;text-align:center;line-height:11px;font-size:11px;letter-spacing:-0.25px;color:#000;white-space:pre;">B</div>
<div style="position:absolute;left:182.5px;top:450.69px;width:400px;text-align:center;line-height:11px;font-size:11px;letter-spacing:-0.25px;color:#000;white-space:pre;">lw</div>
<div style="position:absolute;left:266.0px;top:450.69px;width:400px;text-align:center;line-height:11px;font-size:11px;letter-spacing:-0.25px;color:#000;white-space:pre;">HeadL</div>
<div style="position:absolute;left:362.5px;top:450.69px;width:400px;text-align:center;line-height:11px;font-size:11px;letter-spacing:-0.25px;color:#000;white-space:pre;">Middle</div>
<div style="position:absolute;left:459.0px;top:450.69px;width:400px;text-align:center;line-height:11px;font-size:11px;letter-spacing:-0.25px;color:#000;white-space:pre;">HeadR</div>
<div style="position:absolute;left:549.0px;top:450.69px;width:400px;text-align:center;line-height:11px;font-size:11px;letter-spacing:-0.25px;color:#000;white-space:pre;">Stirrup</div>
<div style="position:absolute;left:645.5px;top:450.69px;width:400px;text-align:center;line-height:11px;font-size:11px;letter-spacing:-0.25px;color:#000;white-space:pre;">Head Stirrup</div>
<div style="position:absolute;left:748.5px;top:450.69px;width:400px;text-align:center;line-height:11px;font-size:11px;letter-spacing:-0.25px;color:#000;white-space:pre;">Vd</div>
<div style="position:absolute;left:851.5px;top:450.69px;width:400px;text-align:center;line-height:11px;font-size:11px;letter-spacing:-0.25px;color:#000;white-space:pre;">Ve</div>
<div style="position:absolute;left:954.5px;top:450.69px;width:400px;text-align:center;line-height:11px;font-size:11px;letter-spacing:-0.25px;color:#000;white-space:pre;">Vr</div>
<div style="position:absolute;left:1062.0px;top:450.69px;width:400px;text-align:center;line-height:11px;font-size:11px;letter-spacing:-0.25px;color:#000;white-space:pre;">VeMax</div>
<div style="position:absolute;left:25px;top:469px;width:5px;height:17px;background:#12e3e3"></div>
<div style="position:absolute;left:60px;top:468px;width:1258px;height:18px;background:#12e3e3"></div>
<div style="position:absolute;left:23px;top:505px;width:1295px;height:1px;background:#c3c3c3"></div>
<div style="position:absolute;left:23px;top:524px;width:1295px;height:1px;background:#c3c3c3"></div>
<div style="position:absolute;left:59px;top:468px;width:1px;height:57px;background:#c3c3c3"></div>
<div style="position:absolute;left:138px;top:468px;width:1px;height:57px;background:#c3c3c3"></div>
<div style="position:absolute;left:267px;top:468px;width:1px;height:57px;background:#c3c3c3"></div>
<div style="position:absolute;left:344px;top:468px;width:1px;height:57px;background:#c3c3c3"></div>
<div style="position:absolute;left:421px;top:468px;width:1px;height:57px;background:#c3c3c3"></div>
<div style="position:absolute;left:511px;top:468px;width:1px;height:57px;background:#c3c3c3"></div>
<div style="position:absolute;left:614px;top:468px;width:1px;height:57px;background:#c3c3c3"></div>
<div style="position:absolute;left:704px;top:468px;width:1px;height:57px;background:#c3c3c3"></div>
<div style="position:absolute;left:794px;top:468px;width:1px;height:57px;background:#c3c3c3"></div>
<div style="position:absolute;left:897px;top:468px;width:1px;height:57px;background:#c3c3c3"></div>
<div style="position:absolute;left:1000px;top:468px;width:1px;height:57px;background:#c3c3c3"></div>
<div style="position:absolute;left:1103px;top:468px;width:1px;height:57px;background:#c3c3c3"></div>
<div style="position:absolute;left:1206px;top:468px;width:1px;height:57px;background:#c3c3c3"></div>
<div style="position:absolute;left:1318px;top:468px;width:1px;height:57px;background:#c3c3c3"></div>
<div style="position:absolute;left:31px;top:469px;width:10px;height:10px;border:1px solid #077a7a;background:transparent"></div>
<div style="position:absolute;left:67.5px;top:473.19px;line-height:11px;font-size:11px;letter-spacing:-0.25px;color:#000;white-space:pre;">P01</div>
<div style="position:absolute;left:145.5px;top:473.19px;line-height:11px;font-size:11px;letter-spacing:-0.25px;color:#000;white-space:pre;">BASE STORY</div>
<div style="position:absolute;left:106.0px;top:473.19px;width:400px;text-align:center;line-height:11px;font-size:11px;letter-spacing:-0.25px;color:#000;white-space:pre;">25 cm</div>
<div style="position:absolute;left:183.0px;top:473.19px;width:400px;text-align:center;line-height:11px;font-size:11px;letter-spacing:-0.25px;color:#000;white-space:pre;">212.5 cm</div>
<div style="position:absolute;left:266.5px;top:473.19px;width:400px;text-align:center;line-height:11px;font-size:11px;letter-spacing:-0.25px;color:#000;white-space:pre;">7Ø16</div>
<div style="position:absolute;left:363.0px;top:473.19px;width:400px;text-align:center;line-height:11px;font-size:11px;letter-spacing:-0.25px;color:#000;white-space:pre;">Ø10/25</div>
<div style="position:absolute;left:459.5px;top:473.19px;width:400px;text-align:center;line-height:11px;font-size:11px;letter-spacing:-0.25px;color:#000;white-space:pre;">9Ø14</div>
<div style="position:absolute;left:549.5px;top:473.19px;width:400px;text-align:center;line-height:11px;font-size:11px;letter-spacing:-0.25px;color:#000;white-space:pre;">Ø8/16</div>
<div style="position:absolute;left:646.0px;top:473.19px;width:400px;text-align:center;line-height:11px;font-size:11px;letter-spacing:-0.25px;color:#000;white-space:pre;">Ø8/8</div>
<div style="position:absolute;left:749.0px;top:473.19px;width:400px;text-align:center;line-height:11px;font-size:11px;letter-spacing:-0.25px;color:#000;white-space:pre;">29.412</div>
<div style="position:absolute;left:852.0px;top:473.19px;width:400px;text-align:center;line-height:11px;font-size:11px;letter-spacing:-0.25px;color:#000;white-space:pre;">88.237</div>
<div style="position:absolute;left:955.0px;top:473.19px;width:400px;text-align:center;line-height:11px;font-size:11px;letter-spacing:-0.25px;color:#000;white-space:pre;">880.018</div>
<div style="position:absolute;left:1062.5px;top:473.19px;width:400px;text-align:center;line-height:11px;font-size:11px;letter-spacing:-0.25px;color:#000;white-space:pre;">2257.812</div>
<div style="position:absolute;left:31px;top:488px;width:10px;height:10px;border:1px solid #000;background:transparent"></div>
<div style="position:absolute;left:67.5px;top:492.29px;line-height:11px;font-size:11px;letter-spacing:-0.25px;color:#000;white-space:pre;">P02</div>
<div style="position:absolute;left:145.5px;top:492.29px;line-height:11px;font-size:11px;letter-spacing:-0.25px;color:#000;white-space:pre;">BASE STORY</div>
<div style="position:absolute;left:106.0px;top:492.29px;width:400px;text-align:center;line-height:11px;font-size:11px;letter-spacing:-0.25px;color:#000;white-space:pre;">25 cm</div>
<div style="position:absolute;left:183.0px;top:492.29px;width:400px;text-align:center;line-height:11px;font-size:11px;letter-spacing:-0.25px;color:#000;white-space:pre;">425 cm</div>
<div style="position:absolute;left:266.5px;top:492.29px;width:400px;text-align:center;line-height:11px;font-size:11px;letter-spacing:-0.25px;color:#000;white-space:pre;">11Ø16</div>
<div style="position:absolute;left:363.0px;top:492.29px;width:400px;text-align:center;line-height:11px;font-size:11px;letter-spacing:-0.25px;color:#000;white-space:pre;">Ø10/25</div>
<div style="position:absolute;left:459.5px;top:492.29px;width:400px;text-align:center;line-height:11px;font-size:11px;letter-spacing:-0.25px;color:#000;white-space:pre;">11Ø16</div>
<div style="position:absolute;left:549.5px;top:492.29px;width:400px;text-align:center;line-height:11px;font-size:11px;letter-spacing:-0.25px;color:#000;white-space:pre;">Ø8/16</div>
<div style="position:absolute;left:646.0px;top:492.29px;width:400px;text-align:center;line-height:11px;font-size:11px;letter-spacing:-0.25px;color:#000;white-space:pre;">Ø8/8</div>
<div style="position:absolute;left:749.0px;top:492.29px;width:400px;text-align:center;line-height:11px;font-size:11px;letter-spacing:-0.25px;color:#000;white-space:pre;">55.513</div>
<div style="position:absolute;left:852.0px;top:492.29px;width:400px;text-align:center;line-height:11px;font-size:11px;letter-spacing:-0.25px;color:#000;white-space:pre;">166.54</div>
<div style="position:absolute;left:955.0px;top:492.29px;width:400px;text-align:center;line-height:11px;font-size:11px;letter-spacing:-0.25px;color:#000;white-space:pre;">1770.512</div>
<div style="position:absolute;left:1062.5px;top:492.29px;width:400px;text-align:center;line-height:11px;font-size:11px;letter-spacing:-0.25px;color:#000;white-space:pre;">4515.625</div>
<div style="position:absolute;left:31px;top:507px;width:10px;height:10px;border:1px solid #000;background:transparent"></div>
<div style="position:absolute;left:67.5px;top:511.29px;line-height:11px;font-size:11px;letter-spacing:-0.25px;color:#000;white-space:pre;">P03</div>
<div style="position:absolute;left:145.5px;top:511.29px;line-height:11px;font-size:11px;letter-spacing:-0.25px;color:#000;white-space:pre;">BASE STORY</div>
<div style="position:absolute;left:106.0px;top:511.29px;width:400px;text-align:center;line-height:11px;font-size:11px;letter-spacing:-0.25px;color:#000;white-space:pre;">25 cm</div>
<div style="position:absolute;left:183.0px;top:511.29px;width:400px;text-align:center;line-height:11px;font-size:11px;letter-spacing:-0.25px;color:#000;white-space:pre;">212.5 cm</div>
<div style="position:absolute;left:266.5px;top:511.29px;width:400px;text-align:center;line-height:11px;font-size:11px;letter-spacing:-0.25px;color:#000;white-space:pre;">7Ø16</div>
<div style="position:absolute;left:363.0px;top:511.29px;width:400px;text-align:center;line-height:11px;font-size:11px;letter-spacing:-0.25px;color:#000;white-space:pre;">Ø10/25</div>
<div style="position:absolute;left:459.5px;top:511.29px;width:400px;text-align:center;line-height:11px;font-size:11px;letter-spacing:-0.25px;color:#000;white-space:pre;">9Ø14</div>
<div style="position:absolute;left:549.5px;top:511.29px;width:400px;text-align:center;line-height:11px;font-size:11px;letter-spacing:-0.25px;color:#000;white-space:pre;">Ø8/16</div>
<div style="position:absolute;left:646.0px;top:511.29px;width:400px;text-align:center;line-height:11px;font-size:11px;letter-spacing:-0.25px;color:#000;white-space:pre;">Ø8/8</div>
<div style="position:absolute;left:749.0px;top:511.29px;width:400px;text-align:center;line-height:11px;font-size:11px;letter-spacing:-0.25px;color:#000;white-space:pre;">29.412</div>
<div style="position:absolute;left:852.0px;top:511.29px;width:400px;text-align:center;line-height:11px;font-size:11px;letter-spacing:-0.25px;color:#000;white-space:pre;">88.237</div>
<div style="position:absolute;left:955.0px;top:511.29px;width:400px;text-align:center;line-height:11px;font-size:11px;letter-spacing:-0.25px;color:#000;white-space:pre;">880.018</div>
<div style="position:absolute;left:1062.5px;top:511.29px;width:400px;text-align:center;line-height:11px;font-size:11px;letter-spacing:-0.25px;color:#000;white-space:pre;">2257.813</div>
<div style="position:absolute;left:24px;top:468px;width:1295px;height:18px;border:1px dotted #000"></div>
<div style="position:absolute;left:700px;top:741px;width:13px;height:13px;border:1px solid #636363;border-radius:3px;background:#f3f3f3;box-shadow:inset 0 0 0 1px #fbfbfb"></div>
<div style="position:absolute;left:715.6px;top:742.69px;line-height:11px;font-size:11px;letter-spacing:-0.19px;color:#000;white-space:pre;">Show Only Reinforcement Shearwalls</div>
<div style="position:absolute;left:927px;top:741px;width:13px;height:13px;border:1px solid #636363;border-radius:3px;background:#f3f3f3;box-shadow:inset 0 0 0 1px #fbfbfb"></div>
<div style="position:absolute;left:943.3px;top:742.69px;line-height:11px;font-size:11px;letter-spacing:-0.37px;color:#000;white-space:pre;">All Stories</div>
<div style="position:absolute;left:1012px;top:737px;width:73px;height:21px;background:#fdfdfd;border:1px solid #d0d0d0;border-bottom-color:#b8b8b8;border-radius:4px"></div>
<div style="position:absolute;left:848.5px;top:743.49px;width:400px;text-align:center;line-height:11px;font-size:11px;letter-spacing:-0.25px;color:#000;white-space:pre;"></div>
<div style="position:absolute;left:1096px;top:737px;width:73px;height:21px;background:#fdfdfd;border:1px solid #d0d0d0;border-bottom-color:#b8b8b8;border-radius:4px"></div>
<div style="position:absolute;left:932.5px;top:743.49px;width:400px;text-align:center;line-height:11px;font-size:11px;letter-spacing:-0.25px;color:#000;white-space:pre;"></div>
<svg style="position:absolute;left:1030px;top:738px" width="120" height="18" viewBox="1030 738 120 18"><path d="M1046.5 745.2 L1041.2 748.4 L1046.5 751.6 M1054.6 745.2 L1049.3 748.4 L1054.6 751.6 M1125.9 745.2 L1131.2 748.4 L1125.9 751.6 M1134 745.2 L1139.3 748.4 L1134 751.6" stroke="#000" stroke-width="1.05" fill="none"/></svg>
<div style="position:absolute;left:1180px;top:737px;width:73px;height:21px;background:#fdfdfd;border:1px solid #0067c0;border-radius:4px;box-shadow:inset 0 0 0 0.4px #0067c0"></div>
<div style="position:absolute;left:1016.5px;top:743.49px;width:400px;text-align:center;line-height:11px;font-size:11px;letter-spacing:-0.25px;color:#000;white-space:pre;">OK</div>
<div style="position:absolute;left:1261px;top:737px;width:73px;height:21px;background:#fdfdfd;border:1px solid #d0d0d0;border-bottom-color:#b8b8b8;border-radius:4px"></div>
<div style="position:absolute;left:1096.5px;top:743.49px;width:400px;text-align:center;line-height:11px;font-size:11px;letter-spacing:-0.25px;color:#000;white-space:pre;">Cancel</div>
</body></html>
